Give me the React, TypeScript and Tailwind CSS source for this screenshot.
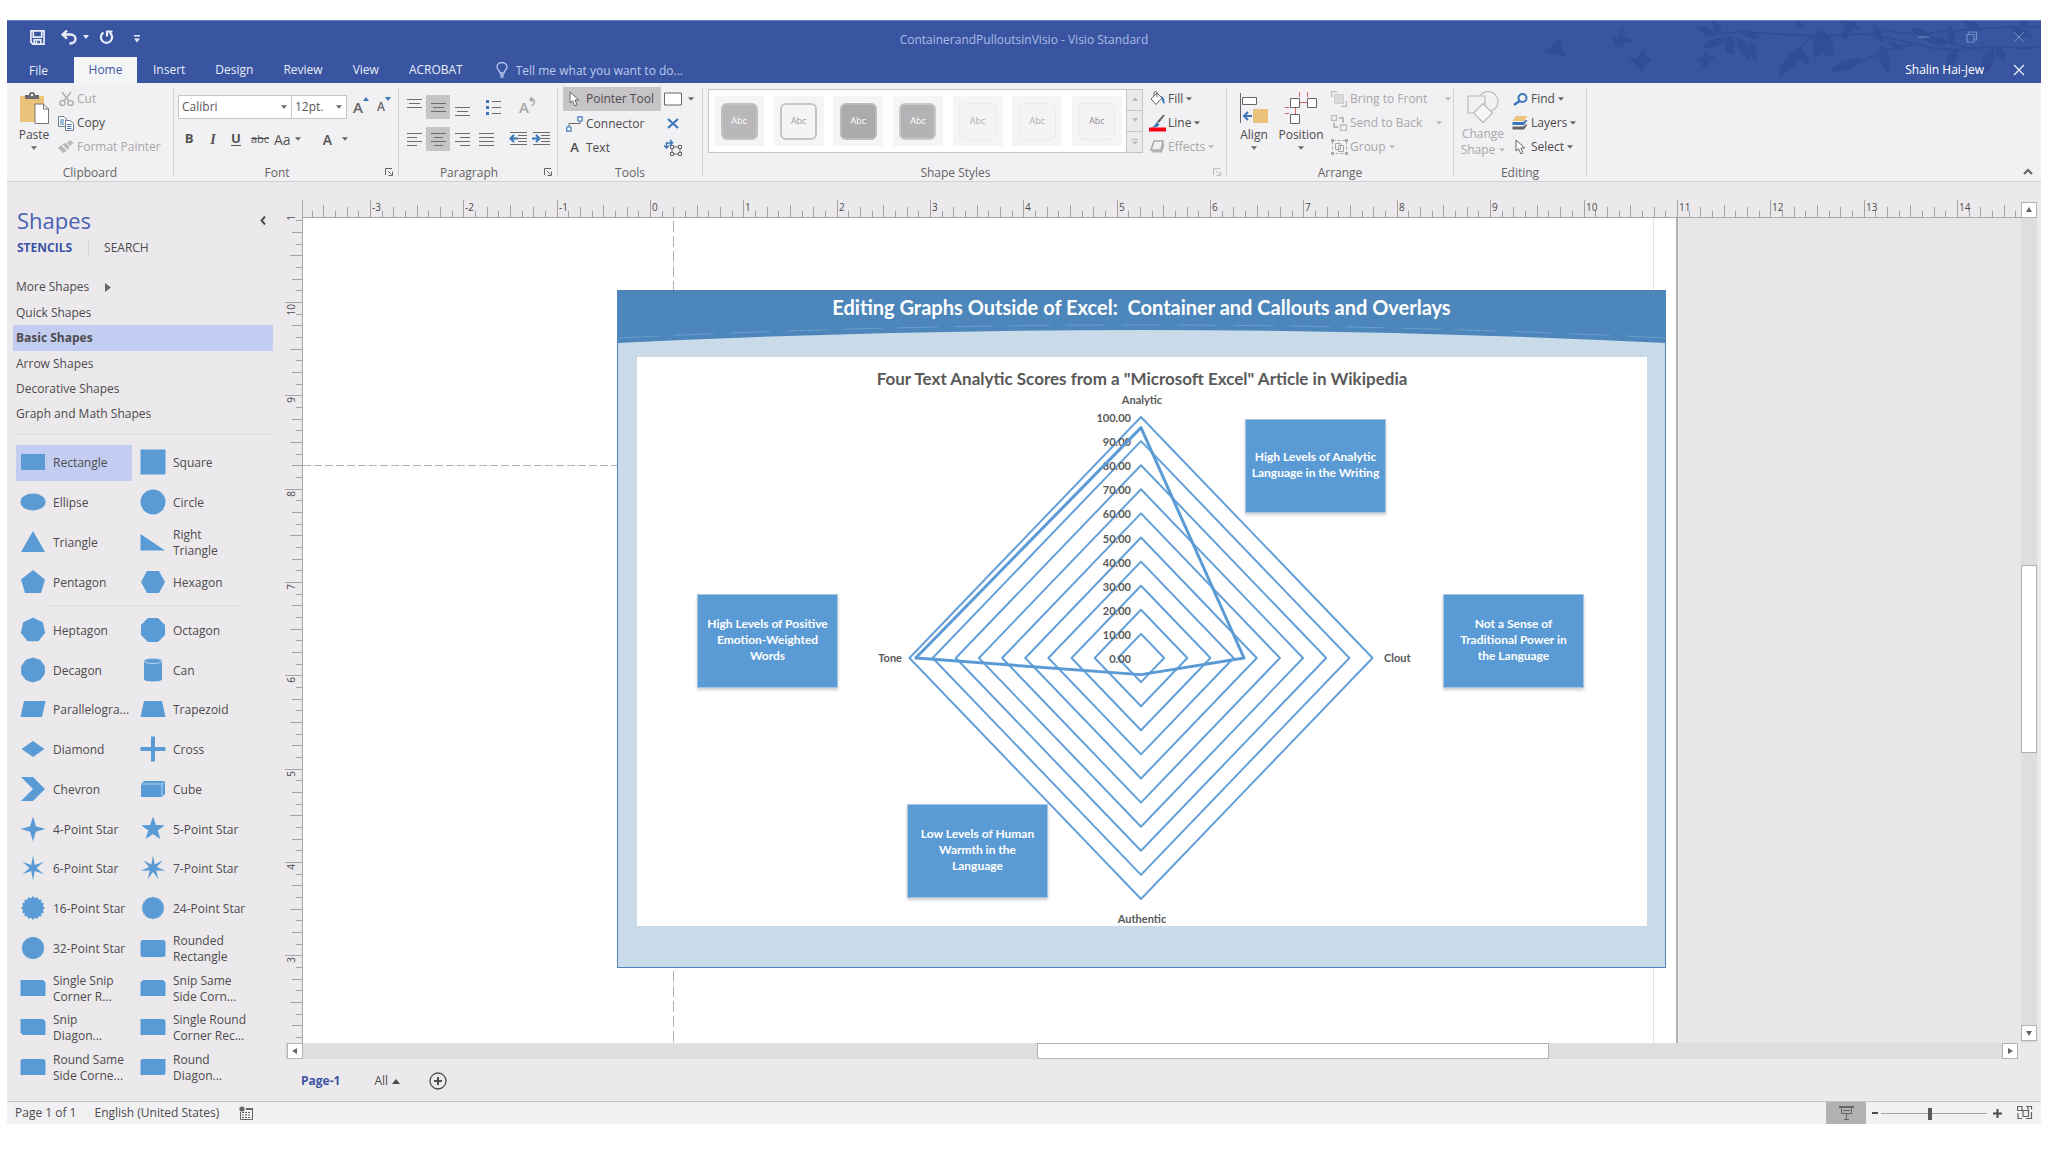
import React, { useLayoutEffect, useRef, useState } from 'react';

type Kids = { children?: React.ReactNode };

const BLUE = '#3b76b8';
const SHAPE = '#5b9bd5';
const INK = '#666466';
const FAINT = '#bcbabc';

function Caret({ faint = false }: { faint?: boolean }) {
  return (
    <svg width="6" height="4" viewBox="0 0 6 4" className="shrink-0" aria-hidden="true">
      <path d="M0 0.3H6L3 3.8Z" fill={faint ? FAINT : INK} />
    </svg>
  );
}

/* ---------- title bar ---------- */

function leaf(x: number, y: number, a: number, l: number, w: number) {
  return (
    <path
      key={`${x}-${y}-${a}`}
      d={`M0 0Q${l * 0.45} ${-w} ${l} 0Q${l * 0.45} ${w} 0 0Z`}
      transform={`translate(${x} ${y}) rotate(${a})`}
    />
  );
}

function Branches() {
  const leaves: [number, number, number, number, number][] = [
    [176, 15, 205, 22, 8], [180, 14, 240, 18, 7], [184, 18, 160, 24, 8], [190, 14, 100, 18, 10], [196, 16, 60, 26, 9],
    [200, 10, 20, 20, 8], [186, 22, 60, 14, 8], [208, 20, 70, 22, 7], [262, 26, 130, 38, 12], [276, 10, 60, 30, 16],
    [284, 8, 110, 30, 13], [258, 28, 60, 20, 8], [320, 8, 200, 24, 8], [332, 4, 60, 20, 8], [310, 4, 120, 18, 8],
    [322, 38, 160, 36, 9], [340, 24, 75, 28, 10], [346, 20, 30, 20, 6], [408, 22, 190, 26, 9], [412, 24, 260, 20, 8],
    [416, 28, 120, 20, 9], [452, 26, 110, 30, 12], [456, 26, 60, 16, 9], [440, 10, 210, 22, 8], [470, 8, 20, 24, 8],
    [480, 6, 300, 16, 8], [370, 8, 20, 22, 8], [262, 6, 220, 10, 5],
  ];
  return (
    <svg width="500" height="63" viewBox="0 0 500 63" className="absolute right-0 top-0 text-[#314d95]" aria-hidden="true">
      <g fill="currentColor">
        <path d="M20 17C14 19 13 25 7 28C2 29 1 31 8 33C16 34 22 34 26 36C22 31 18 27 20 17Z" />
        <path d="M82 6C79 9 80 14 76 17L72 14C73 20 74 24 78 29C81 26 83 22 88 21L93 21C90 17 85 17 82 15Z" />
        <path d="M104 26C99 30 98 36 95 38L88 36C91 42 98 44 100 52C104 49 105 43 109 41L111 37L104 36Z" />
        <path d="M165 29C162 32 162 35 160 37L154 36C156 41 162 42 164 50C168 46 167 41 172 39L174 36L168 35Z" />
        {leaves.map(([x, y, a, l, w]) => leaf(x, y, a, l, w))}
      </g>
      <g fill="none" stroke="currentColor" strokeWidth="2">
        <path d="M180 12C220 8 250 18 300 14C350 8 380 34 430 28C460 22 480 30 500 26" />
        <path d="M258 28C266 16 280 14 296 14M312 44C340 34 340 26 372 24M338 8C380 20 420 4 500 6M380 14C400 18 410 24 436 28" />
      </g>
    </svg>
  );
}

function TitleBar() {
  const tabs = ['Insert', 'Design', 'Review', 'View', 'ACROBAT'];
  return (
    <header className="relative flex h-[63px] flex-col border-t border-[#5d7fc4] bg-[#3955a1] text-[#e8edf8]">
      <Branches />
      <div className="relative grid h-9 grid-cols-[1fr_auto_1fr] items-center">
        <div className="flex items-center pl-[23px] pb-1">
          <button aria-label="Save">
            <svg width="15" height="15" viewBox="0 0 16 16" fill="none" stroke="currentColor" strokeWidth="1.8">
              <path d="M1 1H15V15H3L1 13ZM3.500 1.500V7.500H12.500V1.500M4.500 15V10.500H11.500V15M7 12V14.500" />
            </svg>
          </button>
          <button aria-label="Undo" className="ml-4 flex items-center gap-1.5">
            <svg width="16" height="15" viewBox="0 0 16 15" fill="none" stroke="currentColor" strokeWidth="2.4">
              <path d="M2 4.500H9.500C13 4.500 14.500 7 14.500 9C14.500 11.500 13 13.500 8.500 13.500M6 0.500L1.700 4.600L6 8.700" />
            </svg>
            <svg width="6" height="4" viewBox="0 0 6 4"><path d="M0 0H6L3 4Z" fill="currentColor" /></svg>
          </button>
          <button aria-label="Repeat" className="ml-2.5">
            <svg width="15" height="15" viewBox="0 0 15 15" fill="none" stroke="currentColor" strokeWidth="2.2">
              <path d="M4.500 2.500A5.600 5.600 0 1 0 10.500 2.500M8 6.500V1.500H13.500" />
            </svg>
          </button>
          <button aria-label="Customize toolbar" className="ml-5 mt-1">
            <svg width="6" height="8" viewBox="0 0 6 8" fill="currentColor"><path d="M0 0H6V1.400H0ZM0 3.500H6L3 7.500Z" /></svg>
          </button>
        </div>
        <h1 className="pt-0.5 text-[12px] text-[#a9bce6]">ContainerandPulloutsinVisio - Visio Standard</h1>
        <div className="flex items-center justify-end gap-[34px] pb-1 pr-4 text-[#6f8cc9]">
          <button aria-label="Minimize"><svg width="14" height="12" viewBox="0 0 14 12"><path d="M1 6H12" stroke="currentColor" /></svg></button>
          <button aria-label="Restore">
            <svg width="14" height="12" viewBox="0 0 14 12" fill="none" stroke="currentColor" strokeWidth="1.200"><path d="M2 3.500H9V11H2ZM4 3V1H11.500V9H9.500" /></svg>
          </button>
          <button aria-label="Close window"><svg width="12" height="12" viewBox="0 0 12 12"><path d="M1 1L11 11M11 1L1 11" stroke="currentColor" /></svg></button>
        </div>
      </div>
      <nav className="relative flex flex-1 items-stretch text-[12px]">
        <button className="w-[67px] pr-[26px] pt-0.5 text-right">File</button>
        <button className="mr-px w-[63px] bg-[#f3f5f6] text-[#3f57a5]">Home</button>
        {tabs.map((t) => (
          <button key={t} className="px-[15px]">{t}</button>
        ))}
        <label className="ml-[18px] flex flex-1 items-center gap-2 text-[#b9c9ec]">
          <svg width="12" height="16" viewBox="0 0 12 16" fill="none" stroke="currentColor" strokeWidth="1.300">
            <path d="M4 11C4 8.500 1 8 1 5A5 4.500 0 0 1 11 5C11 8 8 8.500 8 11ZM4 13H8M4.500 15H7.500" />
          </svg>
          <input
            aria-label="Tell me what you want to do"
            className="h-6 w-60 bg-transparent text-[12px] outline-none placeholder:text-[#b9c9ec] placeholder:opacity-100"
            placeholder="Tell me what you want to do..."
          />
        </label>
        <button className="text-white">Shalin Hai-Jew</button>
        <button aria-label="Close" className="ml-[29px] mr-4">
          <svg width="12" height="12" viewBox="0 0 12 12"><path d="M1 1L11 11M11 1L1 11" stroke="currentColor" strokeWidth="1.300" /></svg>
        </button>
      </nav>
    </header>
  );
}

/* ---------- ribbon ---------- */

function Launcher({ faint = false }: { faint?: boolean }) {
  return (
    <button aria-label="More options" className="absolute bottom-0 right-[5px]">
      <svg width="8" height="8" viewBox="0 0 8 8" fill="none" stroke={faint ? FAINT : INK}>
        <path d="M0.500 7V0.500H7M3 3L6.500 6.500M7.500 3.500V7.500H3.500" />
      </svg>
    </button>
  );
}

function Group({ title, width, launcher, children }: Kids & { title: string; width: string; launcher?: 'on' | 'faint' }) {
  return (
    <section aria-label={title} className={`relative my-[5px] flex shrink-0 flex-col border-r border-[#d4d2d4] ${width}`}>
      <div className="flex flex-1">{children}</div>
      <h2 className={`h-[11px] text-center text-[12px] leading-4 text-[#666466] ${launcher ? 'pr-[18px]' : ''}`}>{title}</h2>
      {launcher && <Launcher faint={launcher === 'faint'} />}
    </section>
  );
}

function Cmd({ icon, label, menu, faint = false, gap = 'mr-[3px]' }: { icon: React.ReactNode; label: string; menu?: boolean; faint?: boolean; gap?: string }) {
  return (
    <button className={`flex h-6 items-center whitespace-nowrap ${faint ? 'text-[#a9a7a9]' : 'text-[#4d4b4d]'}`}>
      <span className="flex w-[18px] shrink-0 justify-center">{icon}</span>
      <span className={`ml-0.5 ${gap}`}>{label}</span>
      {menu && <Caret faint={faint} />}
    </button>
  );
}

function Lines({ w, align = 'c', y = 0 }: { w: number[]; align?: 'l' | 'c' | 'r'; y?: number }) {
  return (
    <svg width="15" height="18" viewBox="0 0 15 18" aria-hidden="true">
      {w.map((n, i) => {
        const x = align === 'l' ? 0 : align === 'r' ? 15 - n : (15 - n) / 2;
        return <rect key={i} x={x} y={y + i * 4} width={n} height="1" fill="#6e6c6e" />;
      })}
    </svg>
  );
}

function Pointer() {
  return (
    <svg width="11" height="16" viewBox="0 0 11 16" fill="#fff" stroke={INK}>
      <path d="M1 1V12L3.600 9.800L5.800 14.800L8 13.800L5.900 9H9.800Z" />
    </svg>
  );
}

function Clipboard() {
  return (
    <Group title="Clipboard" width="w-[167px]">
      <button className="ml-3 flex w-[30px] flex-col items-center pt-1 text-[#4d4b4d]">
        <svg width="30" height="32" viewBox="0 0 30 32" className="shrink-0">
          <path d="M1 4H25V30H1Z" fill="#ebc27a" />
          <path d="M6 7V3H10Q10 0 13 0Q16 0 16 3H20V7Z" fill="#6e6c6e" />
          <circle cx="13" cy="3" r="1.200" fill="#fff" />
          <path d="M16 12H24.500L29.500 17V31.500H16Z" fill="#fff" stroke="#777577" />
          <path d="M24.500 12V17H29.500" fill="none" stroke="#777577" />
        </svg>
        <span className="leading-[22px]">Paste</span>
        <Caret />
      </button>
      <div className="-mt-px ml-2 flex flex-col">
        <Cmd faint label="Cut" icon={
          <svg width="15" height="16" viewBox="0 0 15 16" fill="none" stroke="#b3b1b3" strokeWidth="1.600">
            <path d="M3 1L10 10M12 1L5 10" /><circle cx="3.500" cy="12" r="2.500" /><circle cx="11.500" cy="12" r="2.500" />
          </svg>} />
        <Cmd label="Copy" icon={
          <svg width="16" height="15" viewBox="0 0 16 15" fill="#fff" stroke="#707c8a">
            <path d="M0.500 0.500H6L8.500 3V10.500H0.500Z" /><path d="M2 4H6M2 6H6M2 8H6" stroke={BLUE} />
            <path d="M7.500 4.500H12L15.500 7.500V14.500H7.500Z" /><path d="M9 8.500H13.500M9 10.500H13.500M9 12.500H13.500" stroke={BLUE} />
          </svg>} />
        <Cmd faint label="Format Painter" icon={
          <svg width="16" height="15" viewBox="0 0 16 15" fill="#bab8ba">
            <path d="M12 0L15.500 3L12 6L9 3ZM4 4L8 3L11.500 7L10 10ZM3 5L9 11L5 13L0 8Z" />
          </svg>} />
      </div>
    </Group>
  );
}

function Divider() {
  return <span className="h-[22px] w-px shrink-0 bg-[#d4d2d4]" />;
}

function FontGroup() {
  return (
    <Group title="Font" width="w-[225px]" launcher="on">
      <div className="flex flex-col pl-1 pt-[7px]">
        <div className="flex h-6 items-center">
          <div className="relative flex items-center">
            <select aria-label="Font" className="h-6 w-[114px] appearance-none border border-[#c6c4c6] bg-white pl-[3px] text-[12px] text-[#5a585a]"><option>Calibri</option></select>
            <span className="pointer-events-none absolute right-[5px]"><Caret /></span>
          </div>
          <div className="relative -ml-px flex items-center">
            <select aria-label="Font size" className="h-6 w-14 appearance-none border border-[#c6c4c6] bg-white pl-[3px] text-[12px] text-[#5a585a]"><option>12pt.</option></select>
            <span className="pointer-events-none absolute right-[5px]"><Caret /></span>
          </div>
          <button aria-label="Increase font size" className="ml-1.5 flex items-start text-[15px] font-semibold leading-5 text-[#666466]">A
            <svg width="6" height="4" viewBox="0 0 6 4"><path d="M0 4H6L3 0Z" fill={BLUE} /></svg>
          </button>
          <button aria-label="Decrease font size" className="ml-2 flex items-start text-[12px] font-semibold leading-5 text-[#666466]">A
            <svg width="6" height="4" viewBox="0 0 6 4"><path d="M0 0H6L3 4Z" fill={BLUE} /></svg>
          </button>
        </div>
        <div className="mt-2 flex h-6 items-center pl-[5px] text-[13px] text-[#555355]">
          <button className="w-3 font-bold">B</button>
          <button className="ml-3 w-3 font-['Liberation_Serif'] text-[14px] font-bold italic">I</button>
          <button className="ml-[11px] w-3 font-bold underline underline-offset-2">U</button>
          <button className="ml-2 w-5 text-[11px] line-through">abc</button>
          <button className="ml-1 flex items-center gap-1 text-[14px]">Aa<Caret /></button>
          <span className="ml-2.5"><Divider /></span>
          <button className="ml-3 flex items-center gap-2.5 text-[14px] font-semibold">A<Caret /></button>
        </div>
      </div>
    </Group>
  );
}

function IndentIcon({ out = false }: { out?: boolean }) {
  return (
    <svg width="18" height="16" viewBox="0 0 18 16" stroke="#6e6c6e" fill="none">
      <path d="M1 1.500H18M9 4.500H18M9 7.500H18M9 10.500H18M1 13.500H18" />
      <path d={out ? 'M9 7.500H2M5 4L1.500 7.500L5 11' : 'M0 7.500H7M4 4L7.500 7.500L4 11'} stroke={BLUE} strokeWidth="2" />
    </svg>
  );
}

function Paragraph() {
  const cell = 'flex h-6 w-6 items-center justify-center';
  return (
    <Group title="Paragraph" width="w-[159px]" launcher="on">
      <div className="flex flex-col pl-[3px] pt-[7px]">
        <div className="flex h-6 items-center">
          <button aria-label="Align top" className={cell}><Lines w={[15, 11, 15]} y={1} /></button>
          <button aria-label="Align middle" className={`${cell} bg-[#c6c4c6]`}><Lines w={[15, 11, 15]} y={5} /></button>
          <button aria-label="Align bottom" className={cell}><Lines w={[15, 11, 15]} y={9} /></button>
          <span className="ml-1"><Divider /></span>
          <button aria-label="Bullets" className="ml-2">
            <svg width="15" height="17" viewBox="0 0 15 17">
              <path d="M0 1H3V4H0ZM0 7H3V10H0ZM0 13H3V16H0Z" fill={BLUE} /><path d="M6 2.500H15M6 8.500H15M6 14.500H15" stroke="#6e6c6e" />
            </svg>
          </button>
          <span className="ml-[9px]"><Divider /></span>
          <button aria-label="Rotate text" className="ml-[9px] flex items-start text-[15px] font-semibold leading-5 text-[#a9a7a9]">A
            <svg width="7" height="9" viewBox="0 0 7 9" fill="none" stroke="#a9a7a9" strokeWidth="1.400"><path d="M2.500 9Q7 6 4.500 2.500H1M3.500 0L1 2.500L3.500 5" /></svg>
          </button>
        </div>
        <div className="mt-2 flex h-6 items-center">
          <button aria-label="Align left" className={cell}><Lines w={[15, 10, 15, 10]} align="l" y={3} /></button>
          <button aria-label="Align center" className={`${cell} bg-[#c6c4c6]`}><Lines w={[15, 9, 15, 9]} y={3} /></button>
          <button aria-label="Align right" className={cell}><Lines w={[15, 10, 15, 10]} align="r" y={3} /></button>
          <button aria-label="Justify" className={cell}><Lines w={[15, 15, 15, 15]} y={3} /></button>
          <span className="ml-1"><Divider /></span>
          <button aria-label="Decrease indent" className="ml-[7px]"><IndentIcon out /></button>
          <button aria-label="Increase indent" className="ml-[5px]"><IndentIcon /></button>
        </div>
      </div>
    </Group>
  );
}

function Tools() {
  return (
    <Group title="Tools" width="w-[145px]">
      <div className="-mt-px ml-[5px] flex flex-col">
        <button className="flex h-6 w-[98px] items-center bg-[#c6c4c6] text-[#4d4b4d]">
          <span className="flex w-[23px] justify-center"><Pointer /></span>Pointer Tool
        </button>
        <button className="flex h-[25px] items-center text-[#4d4b4d]">
          <span className="flex w-[23px] justify-center">
            <svg width="17" height="16" viewBox="0 0 17 16" fill="#fff"><path d="M3 11V7.500H14V4" fill="none" stroke={INK} /><path d="M0.800 11H5V15.200H0.800ZM12 0.800H16.200V5H12Z" stroke={BLUE} strokeWidth="1.200" /></svg>
          </span>Connector
        </button>
        <button className="flex h-6 items-center text-[#4d4b4d]">
          <span className="w-[23px] text-center text-[13px] font-semibold">A</span>Text
        </button>
      </div>
      <div className="-mt-px ml-[3px] flex flex-col">
        <button aria-label="Rectangle tool" className="flex h-6 items-center gap-1.5">
          <svg width="18" height="14" viewBox="0 0 18 14"><path d="M0.500 1H17.500V13H0.500Z" fill="#fff" stroke={INK} /></svg><Caret />
        </button>
        <button aria-label="Connection point" className="flex h-6 w-[18px] items-center justify-center">
          <svg width="12" height="11" viewBox="0 0 12 11"><path d="M1 1L11 10M11 1L1 10" stroke={BLUE} strokeWidth="2.200" /></svg>
        </button>
        <button aria-label="Text block" className="flex h-6 items-center">
          <svg width="18" height="17" viewBox="0 0 18 17" fill="none" stroke={INK}>
            <path d="M8 8H16V15H8Z" /><path d="M6.500 6.500H9.500V9.500H6.500ZM14.500 6.500H17.500V9.500H14.500ZM6.500 13.500H9.500V16.500H6.500ZM14.500 13.500H17.500V16.500H14.500Z" fill="#f1f0f2" />
            <path d="M2.500 9V4H8M0 6.500L2.500 9L5 6.500M6 1L8.500 3.800L6 6.500" stroke={BLUE} strokeWidth="1.500" />
          </svg>
        </button>
      </div>
    </Group>
  );
}

function ShapeStyles() {
  const tiles = [
    'border-2 border-[#c2c0c2] bg-[#b9b7b9] text-white',
    'border-2 border-[#c6c4c6] bg-[#f5f4f5] text-[#9a989a]',
    'border-2 border-[#bcbabc] bg-[#acaaac] text-white',
    'border-2 border-[#c9c7c9] bg-[#b4b2b4] text-white',
    'border border-[#ecebec] bg-[#f5f4f5] text-[#b0aeb0]',
    'border border-[#ecebec] bg-[#f5f4f5] text-[#b0aeb0]',
    'border border-[#ecebec] bg-[#f5f4f5] text-[#908e90]',
  ];
  return (
    <Group title="Shape Styles" width="w-[524px]" launcher="faint">
      <div className="ml-[5px] mt-px flex h-16 w-[435px] border border-[#c6c4c6] bg-white">
        <div className="flex flex-1 items-center justify-between pl-[5px] pr-1">
          {tiles.map((c, i) => (
            <button key={i} aria-label={`Style ${i + 1}`} className="flex h-[50px] w-[50px] items-center justify-center bg-[#f5f4f6]">
              <span className={`flex h-[37px] w-[37px] items-center justify-center rounded-md text-[9px] ${c}`}>Abc</span>
            </button>
          ))}
        </div>
        <div className="flex w-4 flex-col divide-y divide-[#c6c4c6] border-l border-[#c6c4c6] bg-[#ebe9eb]">
          {['M0 4H6L3 0Z', 'M0 0H6L3 4Z', 'M0 0H6V1H0ZM0 2.500H6L3 5.500Z'].map((d, i) => (
            <button key={d} aria-label={['Previous styles', 'Next styles', 'All styles'][i]} className="flex flex-1 items-center justify-center">
              <svg width="6" height="6" viewBox="0 0 6 6"><path d={d} fill={FAINT} /></svg>
            </button>
          ))}
        </div>
      </div>
      <div className="-mt-px ml-[5px] flex flex-col">
        <Cmd label="Fill" menu icon={
          <svg width="17" height="16" viewBox="0 0 17 16"><path d="M2 8L8 2L13 7L7 13.500Z" fill="#fff" stroke={INK} /><path d="M5 5V2Q5 0.500 6.500 0.500Q8 0.500 8 2V6" fill="none" stroke={INK} /><path d="M12 5Q16 6 15.500 13Q13 12 13 8Z" fill={BLUE} /></svg>} />
        <Cmd label="Line" menu icon={
          <svg width="17" height="18" viewBox="0 0 17 18"><path d="M16 1L10 9L8 7.500L14 1Z" fill={INK} /><path d="M7.500 8L10.500 10.500Q9 14 3 13.500Q6 12 7.500 8Z" fill={BLUE} /><path d="M0 13.500H17V17.500H0Z" fill="#f80011" /></svg>} />
        <Cmd faint label="Effects" menu icon={
          <svg width="16" height="14" viewBox="0 0 16 14"><path d="M5 1H14L12 10H2Z" fill="#f1f0f2" stroke="#a9a7a9" strokeWidth="1.500" /><path d="M14 2L15.500 5L13 12.500H4L2 10.500H12Z" fill="#b3b1b3" /></svg>} />
      </div>
    </Group>
  );
}

function Arrange() {
  return (
    <Group title="Arrange" width="w-[227px]">
      <button className="ml-[11px] flex w-8 flex-col items-center pt-1 text-[#4d4b4d]">
        <svg width="30" height="32" viewBox="0 0 30 32" className="shrink-0">
          <path d="M1.500 1V31" stroke={INK} /><path d="M3.500 5.500H17.500V12.500H3.500Z" fill="#fff" stroke={INK} />
          <path d="M14 17H29V31H14Z" fill="#ebc27a" /><path d="M13 24H6M9 20L5 24L9 28" fill="none" stroke={BLUE} strokeWidth="2" />
        </svg>
        <span className="leading-[22px]">Align</span><Caret />
      </button>
      <button className="ml-2 flex w-[46px] flex-col items-center pt-1 text-[#4d4b4d]">
        <svg width="32" height="32" viewBox="0 0 32 32" className="shrink-0" fill="#fff">
          <path d="M14.500 0V5M22.500 0V5M14 10.500H22M0 15.500H4M0 21.500H4M10.500 15V22" stroke="#e0605c" />
          <path d="M5.500 6.500H14.500V15.500H5.500ZM22.500 6.500H31.500V15.500H22.500ZM5.500 22.500H14.500V31.500H5.500Z" stroke={INK} />
        </svg>
        <span className="leading-[22px]">Position</span><Caret />
      </button>
      <div className="-mt-px ml-[6px] flex flex-col">
        <Cmd faint gap="mr-[18px]" label="Bring to Front" menu icon={
          <svg width="16" height="16" viewBox="0 0 16 16" fill="none" stroke={FAINT}><path d="M6 0.500H0.500V6M10 15.500H15.500V10" strokeWidth="1.400" /><path d="M3.500 3.500H12.500V12.500H3.500Z" fill="#dbd9db" stroke="#d0ced0" /></svg>} />
        <Cmd faint gap="mr-3.5" label="Send to Back" menu icon={
          <svg width="16" height="16" viewBox="0 0 16 16" fill="none" stroke={FAINT}><path d="M0.500 0.500H5.500V5.500H0.500ZM9.500 10H15.500V15.500H9.500Z" strokeWidth="1.300" /><path d="M8 3H12V8M3 8V12H7" strokeWidth="2" /></svg>} />
        <Cmd faint label="Group" menu icon={
          <svg width="17" height="16" viewBox="0 0 17 16" fill="none" stroke="#a9a7a9"><path d="M4.500 4.500H9.500V10.500H4.500ZM7.500 6.500H12.500V12.500H7.500Z" /><path d="M1.500 1.500H15.500V14.500H1.500Z" strokeDasharray="3 2" /><path d="M0 0H3V3H0ZM14 0H17V3H14ZM0 13H3V16H0ZM14 13H17V16H14Z" fill="#a9a7a9" stroke="none" /></svg>} />
      </div>
    </Group>
  );
}

function Editing() {
  return (
    <Group title="Editing" width="w-[133px]">
      <button className="ml-1.5 flex w-[46px] flex-col items-center pt-[3px] text-[#a9a7a9]">
        <svg width="32" height="32" viewBox="0 0 32 32" className="shrink-0" fill="#f1f0f2" stroke={FAINT} strokeWidth="1.200">
          <circle cx="21" cy="10.500" r="10" /><path d="M1 5H18V22H1Z" /><path d="M16 12.500L25.500 22L16 31.500L6.500 22Z" fill="#f8f7f8" />
        </svg>
        <span className="mt-0.5 leading-[18px]">Change</span>
        <span className="flex items-center gap-1 leading-[14px]">Shape<Caret faint /></span>
      </button>
      <div className="-mt-px ml-[5px] flex flex-col">
        <Cmd label="Find" menu icon={
          <svg width="15" height="13" viewBox="0 0 15 13" fill="none" stroke={BLUE} strokeWidth="2"><circle cx="9.500" cy="5" r="4" /><path d="M6.500 8L1 12" strokeWidth="2.500" /></svg>} />
        <Cmd label="Layers" menu icon={
          <svg width="16" height="14" viewBox="0 0 16 14"><path d="M4 0H15.500L12 5H0.500Z" fill="#ebc27a" /><path d="M0.500 6H11L14 4H15.500L12 9H0.500Z" fill={BLUE} /><path d="M0.500 10.500H11L14 8.500H15.500L12 13.500H0.500Z" fill={INK} /></svg>} />
        <Cmd label="Select" menu icon={<Pointer />} />
      </div>
    </Group>
  );
}

function Ribbon() {
  return (
    <div className="flex h-[99px] border-b border-[#d2d0d2] bg-[#f1f0f2] text-[12px]">
      <Clipboard />
      <FontGroup />
      <Paragraph />
      <Tools />
      <ShapeStyles />
      <Arrange />
      <Editing />
      <div className="flex flex-1 items-end justify-end pb-1 pr-2">
        <button aria-label="Collapse ribbon">
          <svg width="10" height="10" viewBox="0 0 10 10" fill="none" stroke={INK} strokeWidth="2"><path d="M1 7L5 3L9 7" /></svg>
        </button>
      </div>
    </div>
  );
}

/* ---------- shapes pane ---------- */

function ring(n: number, r: number, start = -90) {
  return Array.from({ length: n }, (_, i) => {
    const a = ((start + (360 / n) * i) * Math.PI) / 180;
    return `${(13 + r * Math.cos(a)).toFixed(2)},${(13 + r * Math.sin(a)).toFixed(2)}`;
  }).join(' ');
}

function star(n: number, outer: number, inner: number) {
  return Array.from({ length: n * 2 }, (_, i) => {
    const r = i % 2 ? inner : outer;
    const a = ((-90 + (180 / n) * i) * Math.PI) / 180;
    return `${(13 + r * Math.cos(a)).toFixed(2)},${(13 + r * Math.sin(a)).toFixed(2)}`;
  }).join(' ');
}

const P = (d: string) => <path d={d} />;
const G = (points: string) => <polygon points={points} />;

type Item = { name: string; art: React.ReactNode };

const basic: Item[] = [
  { name: 'Rectangle', art: P('M1 5H25V21H1Z') },
  { name: 'Square', art: P('M0.500 0.500H25.500V25.500H0.500Z') },
  { name: 'Ellipse', art: <ellipse cx="13" cy="13" rx="12.500" ry="8.500" /> },
  { name: 'Circle', art: <circle cx="13" cy="13" r="12.500" /> },
  { name: 'Triangle', art: P('M13 2L25 23H1Z') },
  { name: 'Right\nTriangle', art: P('M0.500 5L25 21.500H0.500Z') },
  { name: 'Pentagon', art: P('M13 1L25 10.500L21 24H5L1 10.500Z') },
  { name: 'Hexagon', art: P('M7 2H19L25 13L19 24H7L1 13Z') },
];

const more: Item[] = [
  { name: 'Heptagon', art: G(ring(7, 12.5)) },
  { name: 'Octagon', art: G(ring(8, 13, -67.5)) },
  { name: 'Decagon', art: G(ring(10, 12.5)) },
  { name: 'Can', art: <><path d="M4 3.500V22Q4 24.500 13 24.500Q22 24.500 22 22V3.500Z" /><ellipse cx="13" cy="4" rx="9" ry="2.500" stroke="#b5d0ea" /></> },
  { name: 'Parallelogra...', art: P('M4 5H25.500L22 21H0.500Z') },
  { name: 'Trapezoid', art: P('M4 5H22L25.500 21H0.500Z') },
  { name: 'Diamond', art: P('M13 5L24.500 13L13 21L1.500 13Z') },
  { name: 'Cross', art: P('M11 0.500H15V11H25.500V15H15V25.500H11V15H0.500V11H11Z') },
  { name: 'Chevron', art: P('M1 1H13L25 13L13 25H1L13 13Z') },
  { name: 'Cube', art: <><path d="M1 8L4 5H25V18L22 21H1Z" /><path d="M1.500 8H22V21M22 8L25 5" fill="none" stroke="#b5d0ea" /></> },
  { name: '4-Point Star', art: G(star(4, 12.5, 4)) },
  { name: '5-Point Star', art: G(star(5, 12.5, 5)) },
  { name: '6-Point Star', art: G(star(6, 12.5, 3.5)) },
  { name: '7-Point Star', art: G(star(7, 12.5, 4)) },
  { name: '16-Point Star', art: G(star(16, 12, 10)) },
  { name: '24-Point Star', art: G(star(24, 11.5, 10.3)) },
  { name: '32-Point Star', art: G(star(32, 11.5, 10.6)) },
  { name: 'Rounded\nRectangle', art: <rect x="0.500" y="5" width="25" height="17" rx="2.500" /> },
  { name: 'Single Snip\nCorner R...', art: P('M0.500 5H23L25.500 7.500V21H0.500Z') },
  { name: 'Snip Same\nSide Corn...', art: P('M3 5H23L25.500 7.500V21H0.500V7.500Z') },
  { name: 'Snip\nDiagon...', art: P('M0.500 5H23L25.500 7.500V21H3L0.500 18.500Z') },
  { name: 'Single Round\nCorner Rec...', art: P('M0.500 5H23Q25.500 5 25.500 7.500V21H0.500Z') },
  { name: 'Round Same\nSide Corne...', art: P('M3 5H23Q25.500 5 25.500 7.500V21H0.500V7.500Q0.500 5 3 5Z') },
  { name: 'Round\nDiagon...', art: P('M3 5H25.500V18.500Q25.500 21 23 21H0.500V7.500Q0.500 5 3 5Z') },
];

function ShapeButton({ item, active = false }: { item: Item; active?: boolean }) {
  return (
    <button className={`flex items-center text-left leading-4 ${active ? 'my-[2px] bg-[#c3cdf1]' : ''}`}>
      <svg width="26" height="26" viewBox="0 0 26 26" fill={SHAPE} className="mb-0.5 ml-1 mr-[7px] shrink-0">{item.art}</svg>
      <span className="whitespace-pre">{item.name}</span>
    </button>
  );
}

function ShapesPane() {
  const stencils = ['Quick Shapes', 'Basic Shapes', 'Arrow Shapes', 'Decorative Shapes', 'Graph and Math Shapes'];
  return (
    <aside className="flex w-[278px] shrink-0 flex-col pb-[13px] pl-1.5 pr-3 text-[12px] text-[#4d4b4d]">
      <div className="flex items-center justify-between pl-1 pr-[7px] pt-[22px]">
        <h2 className="text-[22px] leading-8 text-[#4a5fb4]">Shapes</h2>
        <button aria-label="Collapse pane">
          <svg width="6" height="9" viewBox="0 0 6 9" fill="none" stroke="#4d4b4d" strokeWidth="2"><path d="M5 0.500L1.500 4.500L5 8.500" /></svg>
        </button>
      </div>
      <div className="flex h-6 items-center pl-1">
        <button className="font-bold text-[#3b54a5]">STENCILS</button>
        <span className="ml-4 mr-[15px] h-3.5 w-px bg-[#cfcdcf]" />
        <button>SEARCH</button>
      </div>
      <ul className="mt-3.5 flex flex-col">
        <li>
          <button className="flex h-[26px] items-center gap-4 pl-[3px]">More Shapes
            <svg width="6" height="9" viewBox="0 0 6 9"><path d="M0 0L6 4.500L0 9Z" fill={INK} /></svg>
          </button>
        </li>
        {stencils.map((s) => (
          <li key={s}>
            <button className={`flex w-full items-center pl-[3px] ${s === 'Basic Shapes' ? 'h-[26px] bg-[#c3cdf1] font-bold' : 'h-[25px]'}`}>{s}</button>
          </li>
        ))}
      </ul>
      <div className="mt-2 grid auto-rows-[40px] grid-cols-[116px_116px] gap-x-1 border-t border-[#dddbdd] pl-[3px] pt-2">
        {basic.map((s, i) => <ShapeButton key={s.name} item={s} active={i === 0} />)}
      </div>
      <div className="ml-[34px] mr-8 mt-0.5 h-px bg-[#dddbdd]" />
      <div className="mt-[5px] grid flex-1 auto-rows-fr grid-cols-[116px_116px] gap-x-1 pl-[3px]">
        {more.map((s) => <ShapeButton key={s.name} item={s} />)}
      </div>
    </aside>
  );
}

/* ---------- drawing area ---------- */

const UNIT = 93.35;

function tickLen(i: number) {
  return i % 8 === 0 ? 17 : i % 4 === 0 ? 12 : i % 2 === 0 ? 10 : 6;
}

function useSize() {
  const ref = useRef<HTMLDivElement>(null);
  const [size, setSize] = useState({ w: 0, h: 0 });
  useLayoutEffect(() => {
    const el = ref.current;
    if (!el) return;
    const measure = () => setSize({ w: el.clientWidth, h: el.clientHeight });
    measure();
    const observer = new ResizeObserver(measure);
    observer.observe(el);
    return () => observer.disconnect();
  }, []);
  return { ref, ...size };
}

function TopRuler() {
  const { ref, w } = useSize();
  const origin = 347;
  const first = Math.ceil((-origin * 8) / UNIT);
  const last = Math.floor(((w - origin) * 8) / UNIT);
  const ticks = Array.from({ length: Math.max(0, last - first + 1) }, (_, i) => first + i);
  return (
    <div ref={ref} className="h-[18px] border-b border-[#aaa8aa]">
      <svg className="h-full w-full" aria-hidden="true">
        {ticks.map((i) => {
          const x = Math.round(origin + (i * UNIT) / 8);
          return (
            <g key={i}>
              <rect x={x} y={17 - tickLen(i)} width="1" height={tickLen(i)} fill="#a3a1a3" />
              {i % 8 === 0 && x < w - 16 && <text x={x + 2} y="11" fontSize="10" fill="#4d4b4d">{i / 8}</text>}
            </g>
          );
        })}
      </svg>
    </div>
  );
}

function SideRuler() {
  const { ref, h } = useSize();
  const origin = 84;
  const first = Math.ceil((-origin * 8) / UNIT);
  const last = Math.floor(((h - origin) * 8) / UNIT);
  const ticks = Array.from({ length: Math.max(0, last - first + 1) }, (_, i) => first + i);
  return (
    <div ref={ref} className="min-h-0 flex-1 border-r border-[#aaa8aa]">
      <svg className="h-full w-full overflow-visible" aria-hidden="true">
        {h > 0 && <text transform="translate(10 -3) rotate(-90)" textAnchor="end" fontSize="10" fill="#4d4b4d">1</text>}
        {ticks.map((i) => {
          const y = Math.round(origin + (i * UNIT) / 8);
          return (
            <g key={i}>
              <rect y={y} x={17 - tickLen(i)} height="1" width={tickLen(i)} fill="#a3a1a3" />
              {i % 8 === 0 && y < h - 16 && <text transform={`translate(10 ${y + 2}) rotate(-90)`} textAnchor="end" fontSize="10" fill="#4d4b4d">{10 - i / 8}</text>}
            </g>
          );
        })}
      </svg>
    </div>
  );
}

function Radar() {
  const cx = 504;
  const cy = 301;
  const rx = 231.5;
  const ry = 241;
  const ringAt = (k: number) => `${cx},${cy - ry * k} ${cx + rx * k},${cy} ${cx},${cy + ry * k} ${cx - rx * k},${cy}`;
  const levels = [10, 20, 30, 40, 50, 60, 70, 80, 90, 100];
  return (
    <svg width="1010" height="569" viewBox="0 0 1010 569" className="absolute left-0 top-0" role="img" aria-label="Radar chart">
      <g fill="none" stroke="#64a0d8" strokeWidth="2" strokeLinejoin="round">
        {levels.map((v) => <polygon key={v} points={ringAt(v / 100)} />)}
      </g>
      <g fontSize="11" fontWeight="700" fill="#595959" fontFamily="Lato, sans-serif">
        {[0, ...levels].map((v) => (
          <text key={v} x="494" y={Math.round(cy + 5 - (ry * v) / 100)} textAnchor="end">{v.toFixed(2)}</text>
        ))}
        <text x="505" y="47" textAnchor="middle">Analytic</text>
        <text x="505" y="566" textAnchor="middle">Authentic</text>
        <text x="265" y="305" textAnchor="end">Tone</text>
        <text x="747" y="305">Clout</text>
      </g>
      <polygon
        points={`${cx},${cy - ry * 0.956} ${cx + rx * 0.445},${cy} ${cx},${cy + ry * 0.069} ${cx - rx * 0.973},${cy}`}
        fill="none" stroke={SHAPE} strokeWidth="3" strokeLinejoin="round"
      />
    </svg>
  );
}

function Callout({ place, children }: Kids & { place: string }) {
  return (
    <div className={`absolute flex h-[94px] w-[141px] items-center justify-center border border-[#a9c4de] bg-[#5b9bd5] pb-0.5 text-center font-[Lato] text-[12px] font-bold leading-4 text-white shadow-[0_2px_3px_rgba(0,0,0,0.2)] ${place}`}>
      <p>{children}</p>
    </div>
  );
}

function Canvas() {
  return (
    <div className="relative min-h-[824px] flex-1 overflow-hidden bg-[#e8e6e8]">
      <div className="absolute inset-y-0 left-0 w-[1375px] border-r-2 border-[#b3b1b3] bg-white">
        <svg className="h-full w-full" aria-hidden="true">
          <path d="M370.500 3V2000" stroke="#b3b1b3" strokeDasharray="11 4" />
          <path d="M0 247.500H314" stroke="#b3b1b3" strokeDasharray="8 3" />
          <path d="M1350.500 0V2000" stroke="#e4e2e4" />
        </svg>
      </div>
      <section className="absolute left-[314px] top-[72px] h-[678px] w-[1049px] border border-[#4d84b9] bg-[#c9dae9]">
        <svg width="1048" height="54" viewBox="0 0 1048 54" className="absolute left-0 top-0" aria-hidden="true">
          <path d="M0 0H1048V52Q524 26 0 52Z" fill="#4d86ba" />
          <path d="M0 47Q524 21 1048 47" fill="none" stroke="#689fd0" strokeDasharray="40 16" />
        </svg>
        <h2 className="relative mt-0.5 text-center font-[Lato] text-[20px] font-bold leading-7 text-white">
          Editing Graphs Outside of Excel:&nbsp; Container and Callouts and Overlays
        </h2>
        <div className="absolute left-[19px] top-[66px] h-[569px] w-[1010px] bg-white">
          <Radar />
          <h3 className="relative pt-2 text-center font-[Lato] text-[17px] font-bold leading-7 text-[#595959]">
            Four Text Analytic Scores from a "Microsoft Excel" Article in Wikipedia
          </h3>
          <Callout place="left-[608px] top-[62px]">High Levels of Analytic<br />Language in the Writing</Callout>
          <Callout place="left-[60px] top-[237px]">High Levels of Positive<br />Emotion-Weighted<br />Words</Callout>
          <Callout place="left-[806px] top-[237px]">Not a Sense of<br />Traditional Power in<br />the Language</Callout>
          <Callout place="left-[270px] top-[447px]">Low Levels of Human<br />Warmth in the<br />Language</Callout>
        </div>
      </section>
    </div>
  );
}

function Arrow({ d, label }: { d: string; label: string }) {
  return (
    <button aria-label={label} className="flex h-4 w-4 shrink-0 items-center justify-center border border-[#b3b1b3] bg-white">
      <svg width="8" height="8" viewBox="0 0 8 8"><path d={d} fill={INK} /></svg>
    </button>
  );
}

function DrawingArea() {
  return (
    <main className="flex min-w-0 flex-1 flex-col">
      <div className="flex flex-1 pr-1 pt-[18px]">
        <div className="flex w-[18px] flex-col">
          <div className="h-[18px] border-r border-[#aaa8aa]" />
          <SideRuler />
        </div>
        <div className="flex min-w-0 flex-1 flex-col">
          <TopRuler />
          <Canvas />
        </div>
        <div className="flex w-4 flex-col bg-[#dfdde0] pb-0.5">
          <div className="h-0.5 bg-[#ebe9eb]" />
          <Arrow label="Scroll up" d="M1 6H7L4 1Z" />
          <div className="grow-[348]" />
          <div className="grow-[187] border border-[#b3b1b3] bg-white" />
          <div className="grow-[273]" />
          <Arrow label="Scroll down" d="M1 2H7L4 7Z" />
        </div>
      </div>
      <div className="mr-[23px] flex bg-[#dfdde0] pl-0.5">
        <Arrow label="Scroll left" d="M6 1V7L1 4Z" />
        <div className="grow-[735]" />
        <div className="grow-[510] border border-[#b3b1b3] bg-white" />
        <div className="grow-[454]" />
        <Arrow label="Scroll right" d="M2 1V7L7 4Z" />
      </div>
      <div className="flex h-[42px] items-center pl-4 pt-0.5 text-[12px] text-[#4d4b4d]">
        <button className="font-bold text-[#3b54a5]">Page-1</button>
        <button className="ml-[34px] flex items-center gap-1">All
          <svg width="8" height="5" viewBox="0 0 8 5"><path d="M0 5H8L4 0Z" fill="#4d4b4d" /></svg>
        </button>
        <button aria-label="Insert page" className="ml-[29px]">
          <svg width="18" height="18" viewBox="0 0 18 18" fill="none" stroke="#4d4b4d"><circle cx="9" cy="9" r="8" strokeWidth="1.300" /><path d="M9 5V13M5 9H13" strokeWidth="2" /></svg>
        </button>
      </div>
    </main>
  );
}

function StatusBar() {
  return (
    <footer className="flex h-[23px] items-stretch border-t border-[#c6c4c6] bg-[#f1f0f2] text-[12px] text-[#4d4b4d]">
      <button className="pl-2">Page 1 of 1</button>
      <button className="ml-[18px]">English (United States)</button>
      <button aria-label="Macros" className="ml-5">
        <svg width="14" height="14" viewBox="0 0 14 14" fill="none" stroke={INK}>
          <path d="M7 2H14V4H7Z" fill={INK} stroke="none" /><path d="M1.500 6V13.500H13.500V4" /><path d="M3 6.500H12M3 9H12M3 11.500H12" strokeDasharray="2 1" /><circle cx="3" cy="3" r="2.600" fill={INK} stroke="none" />
        </svg>
      </button>
      <div className="flex-1" />
      <button aria-label="Presentation mode" className="flex w-10 items-center justify-center bg-[#b3b1b3]">
        <svg width="15" height="14" viewBox="0 0 15 14" fill="none" stroke={INK}><path d="M0 1H15" strokeWidth="2" /><path d="M2.500 2V7.500H12.500V2M4 4.500H11M7.500 8V13M5 13.500H10" /></svg>
      </button>
      <button aria-label="Zoom out" className="ml-[3px] flex w-3 items-center justify-center"><span className="h-0.5 w-1.5 bg-[#4d4b4d]" /></button>
      <input
        type="range" aria-label="Zoom" min="0" max="100" defaultValue="46"
        className="h-full w-[106px] appearance-none bg-transparent [&::-webkit-slider-runnable-track]:h-px [&::-webkit-slider-runnable-track]:bg-[#a3a1a3] [&::-webkit-slider-thumb]:-mt-[5px] [&::-webkit-slider-thumb]:h-3 [&::-webkit-slider-thumb]:w-1 [&::-webkit-slider-thumb]:appearance-none [&::-webkit-slider-thumb]:bg-[#5a585a]"
      />
      <button aria-label="Zoom in" className="ml-0.5 flex w-4 items-center justify-center">
        <svg width="9" height="9" viewBox="0 0 9 9"><path d="M4.500 0V9M0 4.500H9" stroke="#4d4b4d" strokeWidth="2" /></svg>
      </button>
      <button aria-label="Fit page to window" className="ml-3 mr-2">
        <svg width="16" height="14" viewBox="0 0 16 14" fill="none" stroke={INK}><path d="M5 0.500H0.500V4.500H5ZM1 7V12.500H5M9 0.500H14.500V3.500M11 1V5M6 4.500H11.500V10.500H6ZM14.500 6V12.500H9" strokeWidth="1.200" /></svg>
      </button>
    </footer>
  );
}

export default function App() {
  return (
    <div className="flex min-h-screen flex-col bg-white px-[7px] pb-7 pt-5 font-['Open_Sans',sans-serif]">
      <TitleBar />
      <Ribbon />
      <div className="flex flex-1 bg-[#ebe9eb]">
        <ShapesPane />
        <DrawingArea />
      </div>
      <StatusBar />
    </div>
  );
}
